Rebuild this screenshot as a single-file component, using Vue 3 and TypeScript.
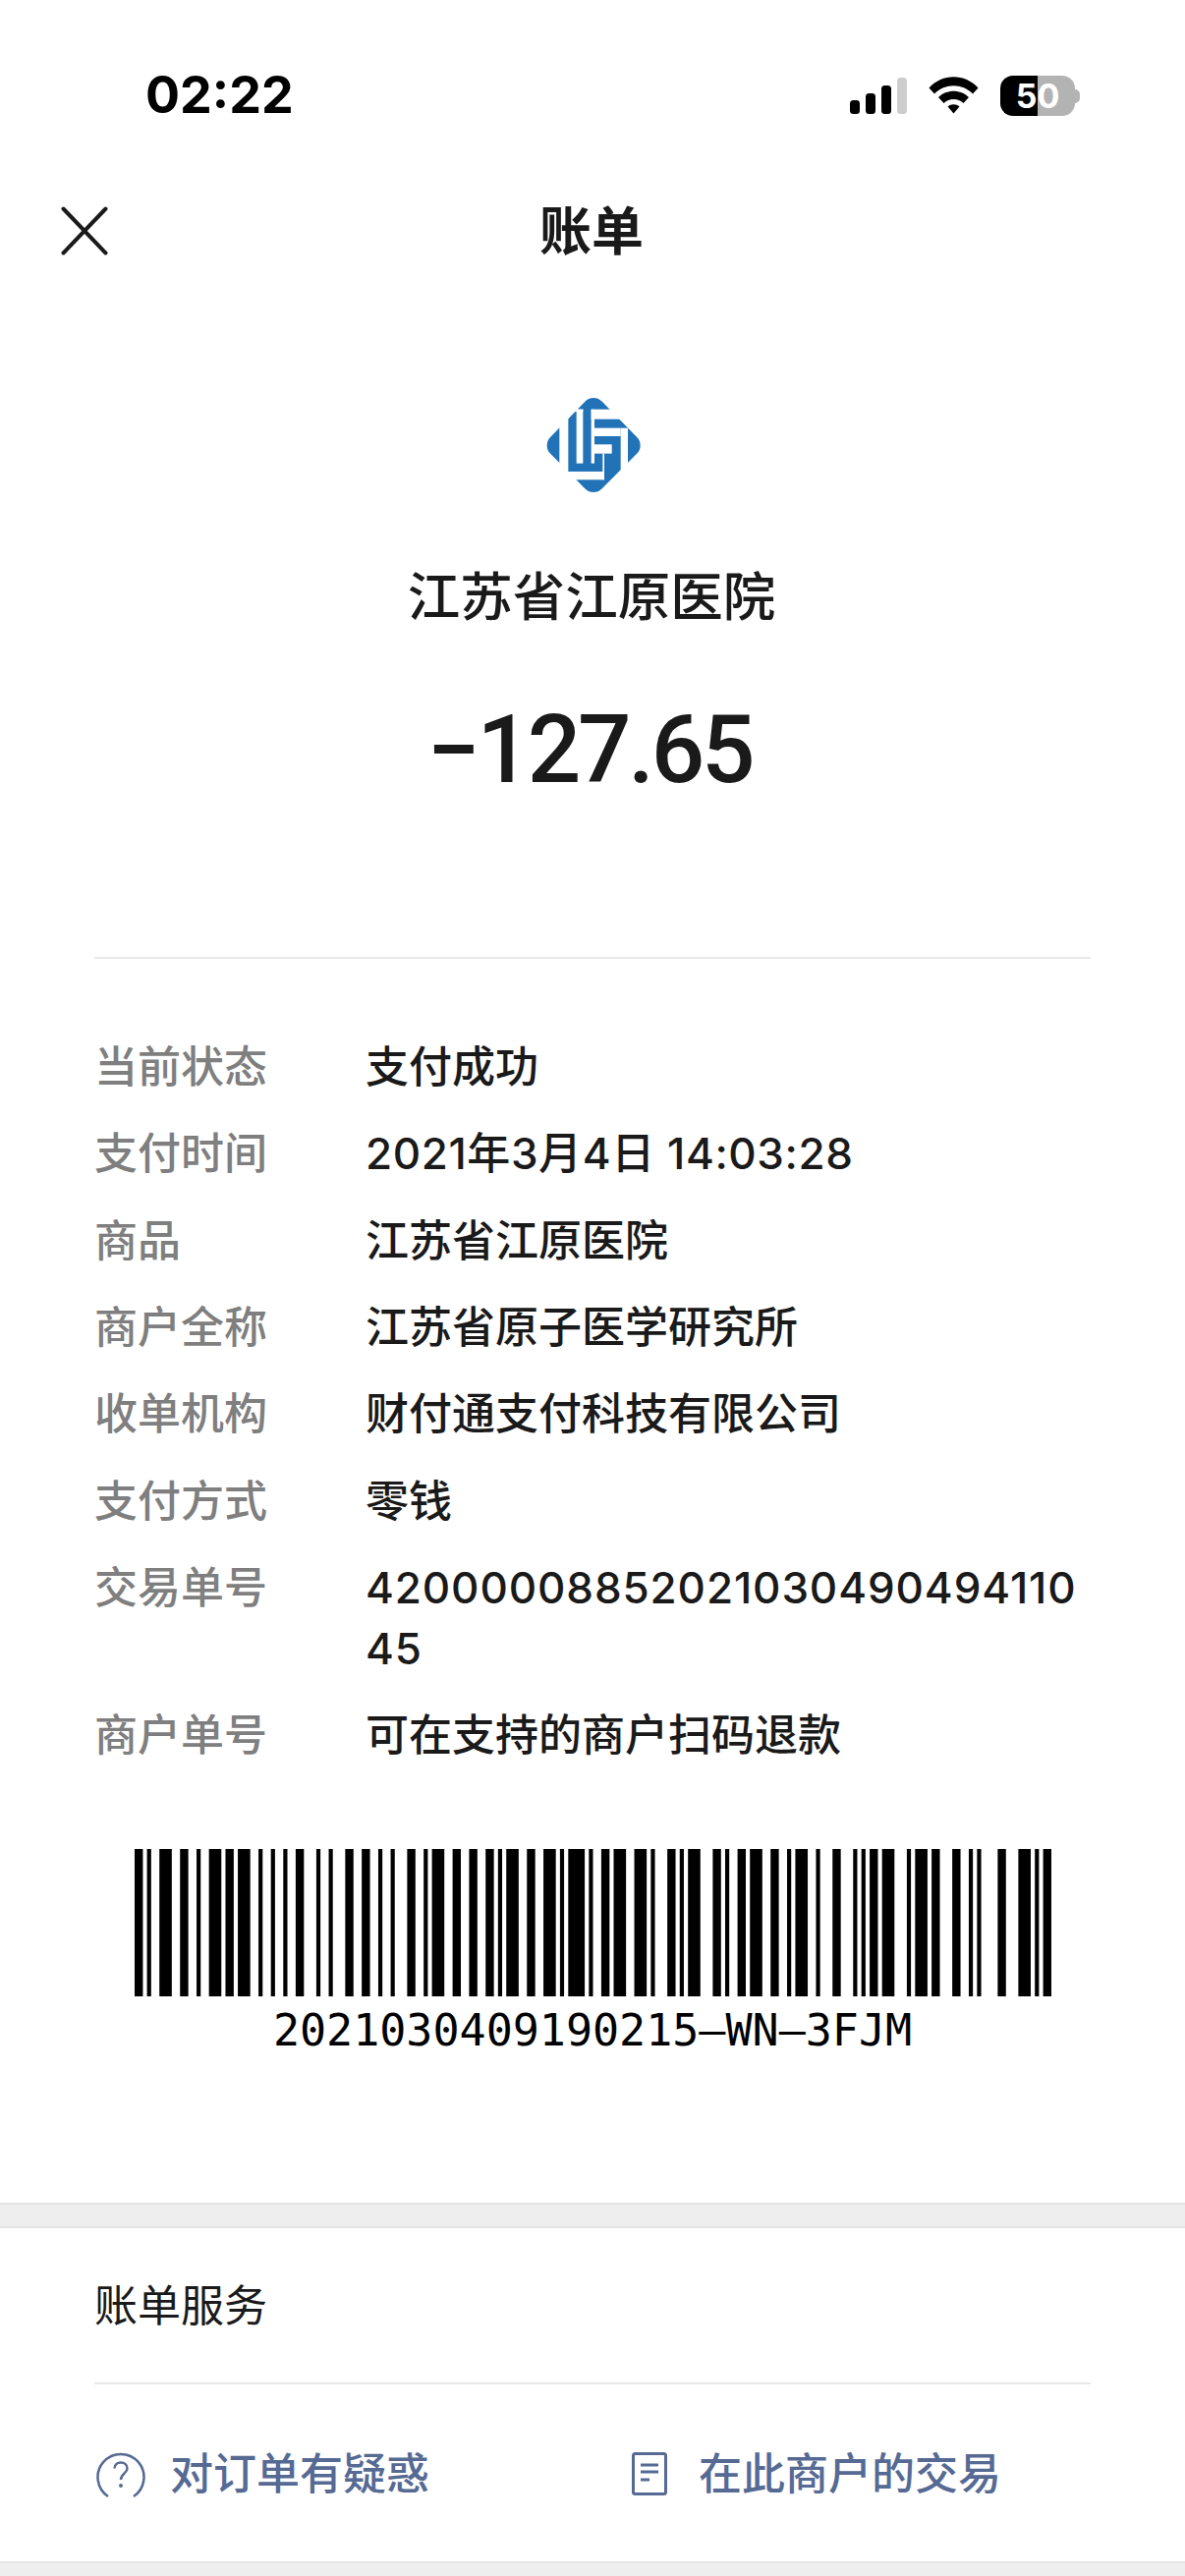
<script setup lang="ts">
// 账单详情页
interface Row {
  label: string;
  value: string;
  kind?: string;
}

const rows: Row[] = [
  { label: "当前状态", value: "支付成功" },
  { label: "支付时间", value: "2021年3月4日 14:03:28", kind: "date" },
  { label: "商品", value: "江苏省江原医院" },
  { label: "商户全称", value: "江苏省原子医学研究所" },
  { label: "收单机构", value: "财付通支付科技有限公司" },
  { label: "支付方式", value: "零钱" },
  { label: "交易单号", value: "4200000885202103049049411045", kind: "number" },
  { label: "商户单号", value: "可在支持的商户扫码退款" },
];

// 条码：条、空交替的模块宽度
const pattern = [
  2, 1, 1, 2, 3, 2, 2, 2, 1, 2, 3, 1, 2, 1, 3, 2, 1, 2, 1, 2, 1, 2, 2, 3, 1, 2, 1, 3, 2, 2, 2, 2,
  1, 2, 1, 3, 2, 2, 1, 1, 3, 2, 2, 2, 2, 2, 2, 1, 1, 1, 3, 2, 2, 2, 3, 1, 1, 1, 4, 1, 1, 2, 2, 1,
  3, 2, 3, 1, 1, 3, 2, 1, 1, 1, 3, 3, 2, 1, 1, 2, 2, 1, 3, 2, 2, 2, 1, 1, 3, 2, 1, 3, 2, 3, 1, 1,
  1, 1, 2, 1, 3, 3, 1, 1, 3, 1, 2, 3, 2, 2, 1, 1, 1, 4, 2, 3, 3, 1, 1, 1, 2,
];

let cursor = 0;
const bars: { x: number; w: number }[] = [];
pattern.forEach((w, i) => {
  if (i % 2 === 0) bars.push({ x: cursor, w });
  cursor += w;
});
const totalModules = cursor;

// 商户图标上的白色分隔块
const logoCuts = [
  [100, 50, 30, 7],
  [155, 50, 90, 30],
  [155, 50, 10, 165],
  [110, 50, 20, 165],
  [58, 60, 27, 190],
  [80, 240, 115, 25],
  [190, 185, 5, 80],
  [165, 107, 80, 25],
  [165, 157, 53, 28],
  [245, 107, 22, 130],
];
</script>

<template>
  <div class="page">
    <div class="status">
      <span class="time">02:22</span>
      <div class="status-icons">
        <svg class="signal" width="58" height="37" viewBox="0 0 58 37">
          <rect x="0" y="23" width="10" height="14" rx="3.5" fill="#000" />
          <rect x="16" y="16" width="10" height="21" rx="3.5" fill="#000" />
          <rect x="32" y="8" width="10" height="29" rx="3.5" fill="#000" />
          <rect x="48" y="0" width="10" height="37" rx="3.5" fill="#cdcdcd" />
        </svg>
        <svg class="wifi" width="51" height="38" viewBox="0 0 51 38">
          <path d="M0.5 11.5 C14 -3.5 37 -3.5 50.5 11.5 L45 17.5 C34.5 6.5 16.5 6.5 6 17.5 Z" fill="#000" />
          <path d="M10 21 C18 12.5 33 12.5 41 21 L35.5 27 C30 21.5 21 21.5 15.5 27 Z" fill="#000" />
          <path d="M19.5 30.5 C23 27.5 28 27.5 31.5 30.5 L25.5 37.5 Z" fill="#000" />
        </svg>
        <div class="battery">
          <span class="battery-body">50</span>
          <span class="battery-nub"></span>
        </div>
      </div>
    </div>

    <div class="nav">
      <svg class="close" width="48" height="50" viewBox="0 0 48 50">
        <path d="M2.5 2.5 L45.5 47.5 M45.5 2.5 L2.5 47.5" stroke="#1a1a1a" stroke-width="4" stroke-linecap="round" fill="none" />
      </svg>
      <h1 class="nav-title">账单</h1>
    </div>

    <div class="merchant">
      <svg class="logo" width="108" height="108" viewBox="0 0 324 324">
        <path
          d="M162 51 L269 160 L162 267 L56 160 Z"
          fill="#2272b8"
          stroke="#2272b8"
          stroke-width="72"
          stroke-linejoin="round"
        />
        <rect v-for="(c, i) in logoCuts" :key="i" :x="c[0]" :y="c[1]" :width="c[2]" :height="c[3]" fill="#fff" />
      </svg>
      <div class="merchant-name">江苏省江原医院</div>
      <div class="amount">−127.65</div>
    </div>

    <div class="divider first"></div>

    <div class="details">
      <div v-for="row in rows" :key="row.label" class="row">
        <span class="row-label">{{ row.label }}</span>
        <span class="row-value" :class="row.kind">{{ row.value }}</span>
      </div>
    </div>

    <div class="barcode">
      <svg class="bars" width="933" height="150" :viewBox="`0 0 ${totalModules} 150`" preserveAspectRatio="none">
        <rect v-for="(bar, i) in bars" :key="i" :x="bar.x" y="0" :width="bar.w" height="150" fill="#000" />
      </svg>
      <div class="barcode-text">2021030409190215–WN–3FJM</div>
    </div>

    <div class="band"></div>

    <div class="services">
      <div class="services-title">账单服务</div>
      <div class="divider"></div>
      <div class="actions">
        <div class="action question">
          <svg width="50" height="48" viewBox="0 0 50 48">
            <path d="M12 47 A23.5 23.5 0 1 1 38 47" fill="none" stroke="#566a94" stroke-width="2.5" />
            <path d="M18.5 18.5 C18.5 10.5 31.5 10.5 31.5 18.5 C31.5 23.5 25 24 25 30" fill="none" stroke="#566a94" stroke-width="2.5" />
            <circle cx="25" cy="36" r="2" fill="#566a94" />
          </svg>
          <span>对订单有疑惑</span>
        </div>
        <div class="action history">
          <svg width="36" height="44" viewBox="0 0 36 44">
            <rect x="1.5" y="1.5" width="33" height="41" rx="2" fill="none" stroke="#566a94" stroke-width="3" />
            <path d="M9 13 H27 M9 20 H27 M9 28 H18" stroke="#566a94" stroke-width="3" fill="none" />
          </svg>
          <span>在此商户的交易</span>
        </div>
      </div>
    </div>

    <div class="band-bottom"></div>
  </div>
</template>

<style scoped>
.page {
  width: 1206px;
  height: 2622px;
  overflow: hidden;
  display: flex;
  flex-direction: column;
  background: #fff;
  color: #1a1a1a;
  font-family: Inter, "Noto Sans CJK SC", sans-serif;
}

.status {
  height: 194px;
  flex-shrink: 0;
  display: flex;
  justify-content: space-between;
  padding: 68px 107px 0 148px;
  box-sizing: border-box;
}

.time {
  font-size: 52px;
  font-weight: 700;
  line-height: 58px;
  color: #000;
}

.status-icons {
  display: flex;
  align-items: flex-start;
  padding-top: 9px;
}

.signal {
  margin-top: 2px;
}

.wifi {
  margin-left: 22px;
  margin-top: 1px;
}

.battery {
  margin-left: 22px;
  display: flex;
  align-items: center;
}

.battery-body {
  width: 76px;
  height: 41px;
  border-radius: 13px;
  background: linear-gradient(90deg, #000 50%, #b3b3b3 50%);
  color: #fff;
  font-size: 34px;
  font-weight: 700;
  line-height: 41px;
  text-align: center;
}

.battery-nub {
  width: 5px;
  height: 14px;
  background: #b3b3b3;
  border-radius: 0 7px 7px 0;
}

.nav {
  height: 80px;
  flex-shrink: 0;
  position: relative;
  display: flex;
  align-items: center;
  justify-content: center;
}

.close {
  position: absolute;
  left: 62px;
  top: 16px;
}

.nav-title {
  margin: 4px 2px 0 0;
  font-size: 53px;
  font-weight: 600;
  line-height: 76px;
}

.merchant {
  display: flex;
  flex-direction: column;
  align-items: center;
  flex-shrink: 0;
}

.logo {
  margin-top: 126px;
  margin-left: 1px;
}

.merchant-name {
  margin: 70px 2px 0 0;
  font-size: 53.5px;
  font-weight: 500;
  line-height: 60px;
}

.amount {
  margin: 70px 6px 0 0;
  font-family: Roboto, sans-serif;
  font-size: 96px;
  font-weight: 500;
  letter-spacing: -3.3px;
  line-height: 110px;
}

.divider {
  height: 2px;
  margin: 0 96px;
  background: #e8e8e8;
  flex-shrink: 0;
}

.divider.first {
  margin-top: 156px;
}

.details {
  margin-top: 66px;
  padding: 0 96px;
  flex-shrink: 0;
}

.row {
  display: flex;
  padding: 13.15px 0;
  font-size: 44px;
  line-height: 62px;
}

.row-label {
  width: 276px;
  flex-shrink: 0;
  color: #7f7f7f;
  font-weight: 500;
}

.row-value {
  font-weight: 500;
  word-break: break-all;
}

.row-value.date {
  letter-spacing: 0.6px;
}

.row-value.number {
  letter-spacing: 0.9px;
}

.barcode {
  margin-top: 71.6px;
  display: flex;
  flex-direction: column;
  align-items: center;
  flex-shrink: 0;
}

.bars {
  display: block;
}

.barcode-text {
  margin-top: 10px;
  font-family: "DejaVu Sans Mono", monospace;
  font-size: 45px;
  line-height: 50px;
  color: #000;
}

.band {
  margin-top: 150px;
  height: 26px;
  background: #eee;
  border-top: 2px solid #e5e5e5;
  border-bottom: 2px solid #e5e5e5;
  box-sizing: border-box;
  flex-shrink: 0;
}

.services {
  flex: 1;
}

.services-title {
  padding: 0 96px 4px;
  height: 157px;
  display: flex;
  align-items: center;
  box-sizing: border-box;
  font-size: 44px;
}

.actions {
  display: flex;
  padding: 66px 0 0 98px;
}

.action {
  display: flex;
  align-items: center;
  font-size: 44px;
  font-weight: 500;
  line-height: 50px;
  color: #566a94;
}

.question {
  width: 545px;
  gap: 25px;
}

.history {
  gap: 32px;
}

.band-bottom {
  height: 15px;
  background: #eee;
  border-top: 2px solid #e5e5e5;
  box-sizing: border-box;
  flex-shrink: 0;
}
</style>
